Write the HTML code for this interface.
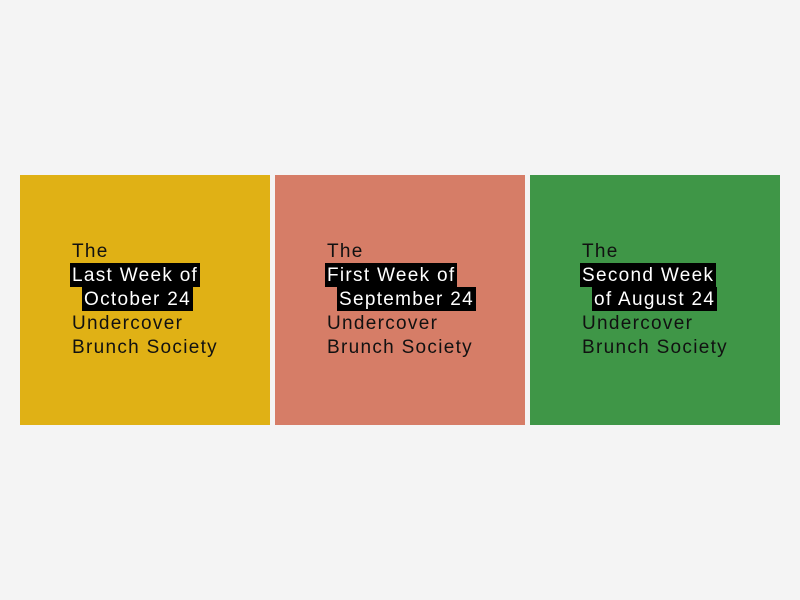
<!DOCTYPE html>
<html><head><style>
body{margin:0;background:#f4f4f4;width:800px;height:600px;position:relative;font-family:"Liberation Sans",sans-serif;}
.c{position:absolute;top:175px;width:250px;height:250px;}
.t{position:absolute;left:52px;top:64px;font-size:19px;line-height:24px;letter-spacing:1.3px;color:#111;white-space:nowrap}
.t div{height:24px;line-height:25px}
.h{display:inline-block;background:#000;color:#fff;padding:0 2px;margin-left:-2px;height:24px}
.i{margin-left:10px}
</style></head><body>
<div class="c" style="left:20px;background:#e0b115"><div class="t"><div>The</div><div><span class="h">Last Week of</span></div><div><span class="h i">October 24</span></div><div>Undercover</div><div>Brunch Society</div></div></div>
<div class="c" style="left:275px;background:#d67d67"><div class="t"><div>The</div><div><span class="h">First Week of</span></div><div><span class="h i">September 24</span></div><div>Undercover</div><div>Brunch Society</div></div></div>
<div class="c" style="left:530px;background:#3f9647"><div class="t"><div>The</div><div><span class="h">Second Week</span></div><div><span class="h i">of August 24</span></div><div>Undercover</div><div>Brunch Society</div></div></div>
</body></html>
